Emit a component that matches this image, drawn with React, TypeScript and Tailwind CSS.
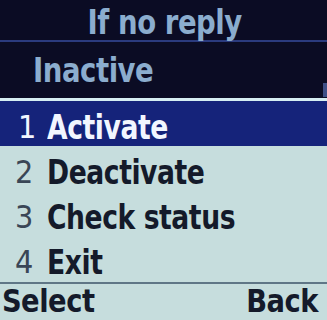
const font = { fontFamily: '"DejaVu Sans Condensed", "DejaVu Sans", sans-serif' };

const items = [
  { n: "2", label: "Deactivate" },
  { n: "3", label: "Check status" },
  { n: "4", label: "Exit" },
];

export default function App() {
  return (
    <div className="flex h-[320px] w-[327px] flex-col overflow-hidden bg-[#c6dddd]" style={font}>
      <div className="flex h-[40px] justify-center bg-[#0b0c24] pt-[5px] pl-[2px] text-[34px] font-bold leading-none tracking-[-0.5px] text-[#8badce]">
        <span className="inline-block scale-x-[0.9]">If no reply</span>
      </div>
      <div className="h-[2px] bg-[#2b3b7e]" />
      <div className="flex h-[56px] items-center justify-between bg-[#0b0c24] pl-[33px]">
        <span className="inline-block origin-left scale-x-[0.9] text-[34px] font-bold leading-none tracking-[-0.5px] text-[#8badce]">
          Inactive
        </span>
        <div className="mt-[40px] h-[14px] w-[4px] bg-[#3f4f86]" />
      </div>
      <div className="h-[3px] bg-[#d6eef2]" />
      <div className="flex h-[45px] items-center bg-[#15237a] pt-[6px] text-[#f2f6ff]">
        <span className="w-[47px] pl-[18px] text-[32px] leading-none">1</span>
        <span className="inline-block origin-left scale-x-[0.87] text-[34px] font-bold leading-none tracking-[-0.5px]">Activate</span>
      </div>
      {items.map((item) => (
        <div key={item.n} className="flex h-[45px] items-center pt-[7px] text-[#141a2a]">
          <span className="w-[47px] pl-[15px] text-[32px] leading-none text-[#3a4656]">{item.n}</span>
          <span className="inline-block origin-left scale-x-[0.87] text-[34px] font-bold leading-none tracking-[-0.5px]">
            {item.label}
          </span>
        </div>
      ))}
      <div className="mt-[1px] h-[2px] bg-[#5f7686]" />
      <div className="flex flex-1 items-start justify-between pt-[3px] text-[32px] font-bold leading-[28px] tracking-[-0.5px] text-[#141a2a]">
        <span className="inline-block origin-left scale-x-[0.95] pl-[2px]">Select</span>
        <span className="inline-block origin-right scale-x-[0.95] pr-[9px]">Back</span>
      </div>
    </div>
  );
}
